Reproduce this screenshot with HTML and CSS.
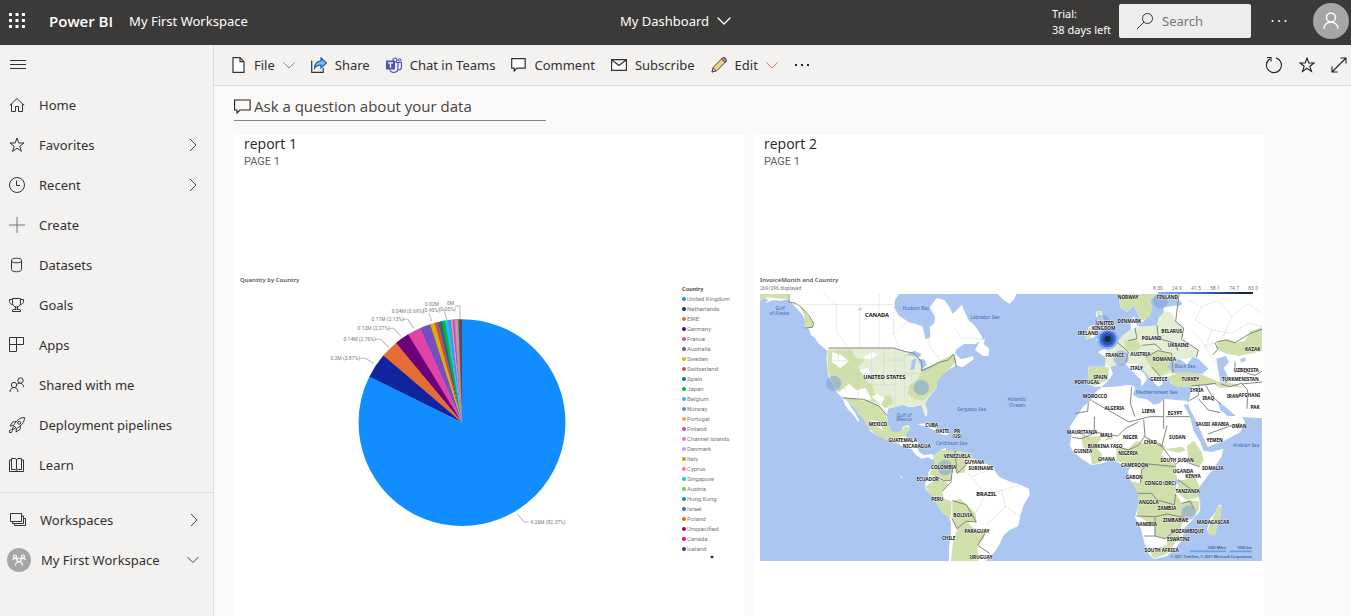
FILE: index.html
```html
<!DOCTYPE html>
<html lang="en">
<head>
<meta charset="utf-8">
<title>My Dashboard - Power BI</title>
<link rel="stylesheet" href="styles.css">
</head>
<body>
<header class="topbar">
  <div class="topbar-left">
    <button class="icon-btn waffle" aria-label="App launcher"><svg width="16" height="16" viewBox="0 0 16 16" fill="#fff"><path d="M0 0h3v3H0zM6.500 0h3v3h-3zM13 0h3v3h-3zM0 6h3v3H0zM6.500 6h3v3h-3zM13 6h3v3h-3zM0 12h3v3H0zM6.500 12h3v3h-3zM13 12h3v3h-3z"/></svg></button>
    <a class="brand" href="#">Power BI</a>
    <a class="crumb" href="#">My First Workspace</a>
  </div>
  <button class="dash-title">My Dashboard <svg width="14" height="8" viewBox="0 0 14 8"><path d="M.5.5 7 7 13.500.5" stroke="#fff" stroke-width="1.300" fill="none"/></svg></button>
  <div class="topbar-right">
    <div class="trial">Trial:<br>38 days left</div>
    <label class="search"><svg width="18" height="18" viewBox="0 0 18 18" fill="none" stroke="#333"><circle cx="11.500" cy="6.500" r="5"/><path d="M8 10 1 17"/></svg><input type="search" placeholder="Search" aria-label="Search"></label>
    <button class="icon-btn more-top" aria-label="More"><svg width="16" height="4" viewBox="0 0 16 4" fill="#fff"><circle cx="1.500" cy="2" r="1"/><circle cx="8" cy="2" r="1"/><circle cx="14.500" cy="2" r="1"/></svg></button>
    <button class="avatar" aria-label="Account"><svg width="16" height="18" viewBox="0 0 16 18" fill="none" stroke="#fff" stroke-width="1.400"><circle cx="8" cy="5.500" r="4.500"/><path d="M1 17c0-4 3-7 7-7s7 3 7 7"/></svg></button>
  </div>
</header>
<div class="shell">
  <nav class="sidebar">
    <button class="icon-btn burger" aria-label="Collapse navigation"><svg width="16" height="10" viewBox="0 0 16 10" stroke="#333"><path d="M0 .5h16M0 4.500h16M0 8.500h16"/></svg></button>
    <a class="nav-item" href="#"><svg class="ico" viewBox="0 0 16 16"><path d="M.7 8.500 8 1.500l7.300 7M2.500 7v7.500h4V9.500h3v5h4V7"/></svg><span>Home</span></a>
    <a class="nav-item" href="#"><svg class="ico" viewBox="0 0 16 16"><path d="m8 1 1.800 5h5.200l-4.200 3.200 1.600 5.200L8 11.200l-4.400 3.200 1.600-5.200L1 6h5.200z"/></svg><span>Favorites</span><svg class="chev" viewBox="0 0 8 14"><path d="m1 1 6 6-6 6"/></svg></a>
    <a class="nav-item" href="#"><svg class="ico" viewBox="0 0 16 16"><circle cx="8" cy="8" r="7.500"/><path d="M7.500 3.500v5h3.500"/></svg><span>Recent</span><svg class="chev" viewBox="0 0 8 14"><path d="m1 1 6 6-6 6"/></svg></a>
    <a class="nav-item" href="#"><svg class="ico plus" viewBox="0 0 16 16"><path d="M8 0v16M0 8h16"/></svg><span>Create</span></a>
    <a class="nav-item" href="#"><svg class="ico" viewBox="0 0 16 16"><ellipse cx="7.500" cy="3.500" rx="5" ry="2.300"/><path d="M2.500 3.500v9c0 3 10 3 10 0v-9"/></svg><span>Datasets</span></a>
    <a class="nav-item" href="#"><svg class="ico" viewBox="0 0 16 16"><path d="M3.500 1.500h8v5c0 4.500-8 4.500-8 0zM3.500 2.500h-3v2c0 2 1.500 3 3.500 3M11.500 2.500h3v2c0 2-1.500 3-3.500 3M6.500 10v2.500M8.500 10v2.500M3.500 14.500v-1.500c1-1 7-1 8 0v1.500z"/></svg><span>Goals</span></a>
    <a class="nav-item" href="#"><svg class="ico" viewBox="0 0 16 16"><path d="M.5.5h14v7h-7v7h-7zM7.500.5v7h-7"/></svg><span>Apps</span></a>
    <a class="nav-item" href="#"><svg class="ico" viewBox="0 0 16 16"><circle cx="11.500" cy="3.500" r="2.700"/><circle cx="5" cy="8" r="2.700"/><path d="M1 15c0-6 8-6 8 0M8.200 7.200c2.500-2 6-1 6.500 3"/></svg><span>Shared with me</span></a>
    <a class="nav-item" href="#"><svg class="ico" viewBox="0 0 16 16"><path d="M15.500.5c-5 0-8 3-11 8l3 3c5-3 8-6 8-11zM7.500 4.500l-4 .5-2.500 4 3.500-.5M11.500 8.500l-.5 4-4 2.500.5-3.500M4.500 9.500l-1.500 3 3.500-1M2.500 12.500l-2 1v2h2l1-2"/><circle cx="10.200" cy="5.800" r="1.500"/></svg><span>Deployment pipelines</span></a>
    <a class="nav-item" href="#"><svg class="ico" viewBox="0 0 16 16"><path d="M7.500 2v10.500M2.500 1.500H6L7.500 2.500 9 1.500h3.500v11H9l-1.500 1-1.500-1H2.500zM2.500 3h-2v11.500h14V3h-2"/></svg><span>Learn</span></a>
    <hr class="rule">
    <a class="nav-item ws" href="#"><svg class="ico" viewBox="0 0 16 16"><path d="M.5 1.500h11v8H.5zM11.500 4h2v7.500h-11v-2M13.500 6.500h2v7h-11v-2"/></svg><span>Workspaces</span><svg class="chev" viewBox="0 0 8 14"><path d="m1 1 6 6-6 6"/></svg></a>
    <a class="nav-item mine" href="#"><span class="badge"><svg width="14" height="12" viewBox="0 0 14 12" fill="none" stroke="#fff" stroke-width="1.200"><circle cx="3" cy="2.500" r="1.500"/><circle cx="11" cy="2.500" r="1.500"/><circle cx="7" cy="6" r="2"/><path d="M.5 6c1-2 3-2 5-1M13.500 6c-1-2-3-2-5-1M3.500 11.500c0-5 7-5 7 0"/></svg></span><span>My First Workspace</span><svg class="chev down" viewBox="0 0 12 8"><path d="m.5 1 5.500 5.500L11.500 1"/></svg></a>
  </nav>
  <main class="main">
    <div class="toolbar">
      <div class="tools">
        <button class="tool"><svg width="14" height="16" viewBox="0 0 14 16" fill="#fff" stroke="#333" stroke-width="1.200"><path d="M1 .7h7l4 4v10.600H1zM8 .7v4h4"/></svg>File<svg class="drop" viewBox="0 0 12 7" stroke="#5f95c5"><path d="m.5.5 5.500 5.500L11.500.5"/></svg></button>
        <button class="tool"><svg width="16" height="16" viewBox="0 0 16 16" fill="none"><path d="M.7 3.500v11.800h11.500V11" stroke="#333" stroke-width="1.200"/><path d="M10 1l5.500 5L10 11V8c-3 0-5 .8-6.500 3.200C3.500 7 6 4 10 4z" fill="#7fbcea" stroke="#0f5a9c" stroke-width="1.200"/></svg>Share</button>
        <button class="tool"><svg width="16" height="16" viewBox="0 0 16 16" fill="none"><circle cx="9" cy="3" r="2" stroke="#4b53bc" stroke-width="1.200"/><circle cx="13.800" cy="3" r="1.300" stroke="#4b53bc"/><path d="M10 5.500h5.500V10c0 2-1.500 3-3 3M12 6v5.500c0 5-8 5-8 1" stroke="#4b53bc" stroke-width="1.200"/><path d="M0 3.500h9v9H0z" fill="#4b53bc"/><path d="M2 5.800h5M4.500 5.800v5" stroke="#fff" stroke-width="1.300"/></svg>Chat in Teams</button>
        <button class="tool"><svg width="15" height="14" viewBox="0 0 15 14" fill="#fff" stroke="#333" stroke-width="1.200"><path d="M.7.7h13.500v9.500H6L3.200 13v-2.800H.7z"/></svg>Comment</button>
        <button class="tool"><svg width="16" height="12" viewBox="0 0 16 12" fill="#fff" stroke="#333" stroke-width="1.200"><path d="M.6.6h14.800v10.800H.6zM.6.8 8 6.500 15.400.8"/></svg>Subscribe</button>
        <button class="tool"><svg width="16" height="16" viewBox="0 0 16 16" stroke="#444"><path d="m1 15 1.500-5L11.500 1l3.500 3.500-9 9z" fill="#f8d37e"/><path d="m10.500 2 1.500-1.500c1.500-.7 4 1.500 3.300 3.300L14 5.500z" fill="#b57ab5"/><path d="m1 15 1.200-4 2.800 2.800z" fill="#eee"/></svg>Edit<svg class="drop" viewBox="0 0 12 7" stroke="#d0805a"><path d="m.5.5 5.500 5.500L11.500.5"/></svg></button>
        <button class="tool" aria-label="More options"><svg width="16" height="4" viewBox="0 0 16 4" fill="#222"><path d="M1 1h2v2H1zM7 1h2v2H7zM13 1h2v2h-2z"/></svg></button>
      </div>
      <div class="tools-right">
        <button class="icon-btn" aria-label="Refresh"><svg width="18" height="18" viewBox="0 0 18 18" fill="none" stroke="#222" stroke-width="1.100"><path d="M11 1.900A7.500 7.500 0 1 1 5 2.700M2 1.500h4v4"/></svg></button>
        <button class="icon-btn" aria-label="Favorite"><svg width="16" height="16" viewBox="0 0 16 16" fill="none" stroke="#222" stroke-width="1.100"><path d="m8 1 1.800 5h5.200l-4.200 3.200 1.600 5.200L8 11.200l-4.400 3.200 1.600-5.200L1 6h5.200z"/></svg></button>
        <button class="icon-btn" aria-label="Full screen"><svg width="16" height="16" viewBox="0 0 16 16" fill="none" stroke="#222" stroke-width="1.100"><path d="M1 15 15 1M9.500 1H15v5.500M1 9.500V15h5.500"/></svg></button>
      </div>
    </div>
    <label class="ask"><svg width="17" height="15" viewBox="0 0 17 15" fill="none" stroke="#222" stroke-width="1.100"><path d="M.6 1h15.500v10H6l-3 3v-3H.6z"/></svg><input type="text" placeholder="Ask a question about your data" aria-label="Ask a question about your data"></label>
    <div class="tiles">
      <section class="tile">
        <h2>report 1</h2>
        <p class="page">PAGE 1</p>
        <div class="visual">
          <h3>Quantity by Country</h3>
          <div class="pie-row">
            <svg class="pie" viewBox="240 286 440 280" role="img" aria-label="Quantity by Country">
              <g transform="rotate(-90 461 423)" fill="none" stroke-width="103">
                <circle cx="461" cy="423" r="51.500" pathLength="100" stroke="#5b4a55" stroke-dasharray="0 99.500 0.500 100"/>
                <circle cx="461" cy="423" r="51.500" pathLength="100" stroke="#7a3b6a" stroke-dasharray="0 99 0.700 100"/>
                <circle cx="461" cy="423" r="51.500" pathLength="100" stroke="#0aa88f" stroke-dasharray="0 99 0.500 100"/>
                <circle cx="461" cy="423" r="51.500" pathLength="100" stroke="#f98a8a" stroke-dasharray="0 99 0.350 100"/>
                <circle cx="461" cy="423" r="51.500" pathLength="100" stroke="#c4a200" stroke-dasharray="0 99 0.250 100"/>
                <circle cx="461" cy="423" r="51.500" pathLength="100" stroke="#b79cf5" stroke-dasharray="0 98.800 0.350 100"/>
                <circle cx="461" cy="423" r="51.500" pathLength="100" stroke="#e86bc4" stroke-dasharray="0 98.600 0.350 100"/>
                <circle cx="461" cy="423" r="51.500" pathLength="100" stroke="#a94fc4" stroke-dasharray="0 98.400 0.350 100"/>
                <circle cx="461" cy="423" r="51.500" pathLength="100" stroke="#ff9b5a" stroke-dasharray="0 98.100 0.400 100"/>
                <circle cx="461" cy="423" r="51.500" pathLength="100" stroke="#4092ff" stroke-dasharray="0 97.700 0.550 100"/>
                <circle cx="461" cy="423" r="51.500" pathLength="100" stroke="#15c6f4" stroke-dasharray="0 97.200 0.600 100"/>
                <circle cx="461" cy="423" r="51.500" pathLength="100" stroke="#1aab40" stroke-dasharray="0 96.700 0.650 100"/>
                <circle cx="461" cy="423" r="51.500" pathLength="100" stroke="#197278" stroke-dasharray="0 96.200 0.650 100"/>
                <circle cx="461" cy="423" r="51.500" pathLength="100" stroke="#d64550" stroke-dasharray="0 95.600 0.700 100"/>
                <circle cx="461" cy="423" r="51.500" pathLength="100" stroke="#d9b300" stroke-dasharray="0 94.900 0.800 100"/>
                <circle cx="461" cy="423" r="51.500" pathLength="100" stroke="#744ec2" stroke-dasharray="0 93.300 1.700 100"/>
                <circle cx="461" cy="423" r="51.500" pathLength="100" stroke="#e044a7" stroke-dasharray="0 91.200 2.200 100"/>
                <circle cx="461" cy="423" r="51.500" pathLength="100" stroke="#6b007b" stroke-dasharray="0 88.900 2.370 100"/>
                <circle cx="461" cy="423" r="51.500" pathLength="100" stroke="#e66c37" stroke-dasharray="0 86.100 2.900 100"/>
                <circle cx="461" cy="423" r="51.500" pathLength="100" stroke="#12239e" stroke-dasharray="0 82.300 3.940 100"/>
                <circle cx="461" cy="423" r="51.500" pathLength="100" stroke="#118dff" stroke-dasharray="82.370 100"/>
              </g>
              <path class="leads" d="M359 359h6l8 5M374 340h6l8 8M388 329h5l7 8M402 320h5l6 9M428 314l3 8M443 310l3 11M454 307h5v13M516 514l7 8h4"/>
              <g class="pie-text">
                <text x="330" y="361">0.2M (3.87%)</text><text x="343" y="342">0.14M (2.76%)</text><text x="357" y="331">0.12M (2.27%)</text><text x="371" y="322">0.11M (2.13%)</text><text x="391" y="314">0.04M (0.69%)</text><text x="424" y="307">0.02M</text><text x="422" y="313">(0.45%)</text><text x="446" y="306">0M</text><text x="438" y="312">(0.05%)</text><text x="529" y="524">4.26M (82.37%)</text>
              </g>
            </svg>
            <div class="legend">
              <strong>Country</strong>
              <ul>
                <li class="c1">United Kingdom</li><li class="c2">Netherlands</li><li class="c3">EIRE</li><li class="c4">Germany</li><li class="c5">France</li><li class="c6">Australia</li><li class="c7">Sweden</li><li class="c8">Switzerland</li><li class="c9">Spain</li><li class="c10">Japan</li><li class="c11">Belgium</li><li class="c12">Norway</li><li class="c13">Portugal</li><li class="c14">Finland</li><li class="c15">Channel Islands</li><li class="c16">Denmark</li><li class="c17">Italy</li><li class="c18">Cyprus</li><li class="c19">Singapore</li><li class="c20">Austria</li><li class="c21">Hong Kong</li><li class="c22">Israel</li><li class="c23">Poland</li><li class="c24">Unspecified</li><li class="c25">Canada</li><li class="c26">Iceland</li>
              </ul>
              <svg class="more" width="4" height="3" viewBox="0 0 4 3"><path d="M0 0h4L2 3z" fill="#333"/></svg>
            </div>
          </div>
        </div>
      </section>
      <section class="tile">
        <h2>report 2</h2>
        <p class="page">PAGE 1</p>
        <div class="visual">
          <h3>InvoiceMonth and Country</h3>
          <div class="map-head"><span>269/296 displayed</span>
            <div class="scale"><div class="nums"><span>8.30</span><span>24.9</span><span>41.5</span><span>58.1</span><span>74.7</span><span>83.0</span></div><div class="bar"></div></div>
          </div>
          <svg class="map" viewBox="15 72 1506 801" role="img" aria-label="InvoiceMonth and Country">
            <path fill="#abc7f1" d="M15 72h1506v801H15z"/>
            <g class="land">
              <path d="M15 72V92L28 84 40 90 30 100 55 90 78 92 97 88 112 102 128 118 142 134 150 150 152 172 162 178 168 196 180 204 190 220 204 232 218 242 214 262 218 300 222 325 235 345 246 368 262 384 270 405 282 422 298 438 309 455 313 452 300 428 286 408 278 392 298 412 312 432 328 448 345 468 344 482 362 494 388 506 410 515 434 524 450 532 470 538 482 554 500 566 520 562 532 570 540 560 530 552 508 556 492 546 486 532 490 516 478 506 462 506 450 498 456 488 466 472 458 466 444 470 440 484 424 490 408 484 398 462 396 436 400 416 424 403 448 406 462 412 474 408 486 402 500 406 506 426 512 440 518 428 510 398 522 378 544 354 546 332 562 314 580 300 604 286 622 292 656 268 654 258 634 264 618 268 600 250 604 238 628 222 662 222 684 206 672 186 658 166 642 152 630 128 620 104 606 120 592 132 584 112 568 90 545 84 524 112 540 140 538 160 524 172 526 202 512 208 502 168 460 156 430 136 418 112 420 90 432 72z"/>
              <path d="M660 240 676 210 690 208 686 222 703 236 700 258 684 258zM728 72l18 18 18 12 14-16 6-14z"/>
              <path d="M535 558 558 540 572 534 576 548 600 542 645 550 655 566 690 580 712 590 722 606 734 622 768 636 796 644 822 656 824 674 806 704 796 738 790 768 764 780 746 796 732 826 716 850 700 864 692 873H582V832L587 800 588 760 583 742 562 730 546 702 530 676 512 656 510 640 520 626V606L532 594 540 580z"/>
              <path d="M486 464 510 460 535 472 558 482 536 480 510 468zM540 486l26-4 18 10-14 4zM598 494h18v5h-18zM436 618l6 2-2 6z"/>
              <path d="M1022 366 1040 352 1076 350 1128 344 1140 352 1134 374 1150 384 1176 388 1196 404 1214 400 1228 386 1262 390 1294 392 1306 402 1286 404 1304 438 1316 482 1336 516 1346 542 1370 546 1405 536 1400 560 1372 600 1340 642 1326 664 1336 698 1335 724 1310 752 1286 776 1284 806 1264 832 1236 858 1196 868 1180 850 1168 818 1158 778 1140 742 1150 706 1150 668 1128 632 1118 606 1130 586 1096 582 1074 568 1042 580 1010 586 980 566 955 546 944 526 950 496 944 470 964 440 986 408 1008 392z"/>
              <path d="M1392 704 1400 706 1396 740 1384 774 1380 796 1364 794 1356 780 1364 748 1380 728z"/>
              <path d="M1093 72 1095 112 1116 126 1136 106 1148 130 1160 158 1180 140 1192 110 1184 92 1202 72zM1232 80 1250 72H1521V445L1470 442 1440 436 1408 408 1388 394 1396 420 1418 438 1440 438 1456 430 1470 456 1456 486 1408 512 1358 530 1344 500 1328 462 1306 420 1300 404 1306 376 1310 348 1268 352 1246 340 1240 320 1214 322 1224 342 1210 350 1188 330 1172 300 1150 282 1142 290 1168 310 1176 328 1160 350 1158 330 1134 306 1110 280 1094 276 1066 290 1074 312 1058 334 1040 350 1018 350 998 342 1000 314 998 290 1050 290 1054 264 1028 246 1054 234 1086 216 1106 194 1128 178 1126 152 1138 138 1144 164 1164 176 1206 166 1212 142 1226 130 1226 112 1268 106 1272 90z"/>
              <path d="M1022 126l16-4 8 26 22 26 8 24-28 12-26 2 16-18-8-22zM1000 172l16-8 10 12-8 26-26 6z"/>
            </g>
            <g class="green">
              <path d="M15 72V90L40 82 76 86 100 86V72zM134 108 148 120 160 140 176 160 174 172 150 170 148 136z"/>
              <path class="pale" d="M218 242 220 234H416L448 244 478 250 500 276 500 300 540 284 556 276 580 270 596 252 604 276 562 314 546 332 544 354 510 398 518 440 506 426 500 406 470 412 448 404 400 416 386 412 360 398 326 388 264 384 235 345 218 300z"/>
              <path d="M218 242 290 238 300 262 330 270 310 290 330 330 352 346 358 370 390 402 360 398 326 388 264 384 235 345 218 300zM500 300 596 252 604 276 546 332 544 354 506 392 480 388 458 370 462 346 486 330zM366 384l40-8 10 24-26 14z"/>
              <path d="M266 386 326 388 372 408 394 436 398 462 410 486 440 484 450 470 466 472 450 498 436 502 432 522 400 512 362 494 344 478 316 436 288 402z"/>
              <path d="M535 558 560 540 600 542 645 550 656 564 634 584 628 608 606 610 594 590 588 632 560 630 540 618 522 616 540 582zM512 650 540 628 566 632 582 642 562 664 566 686 590 694 588 744 562 730 534 684zM592 692 616 686 634 704 662 730 664 756 634 754 606 776 592 744zM606 778 636 754 652 772 690 790 686 806 668 826 670 873H588L594 818z"/>
              <path d="M980 490 1006 500 1044 498 1022 530 1040 550 1042 576 1010 584 1006 548 982 530zM1042 512l34-20-4 16zM1084 528 1120 536 1144 514 1166 520 1180 504 1214 520 1232 530 1218 554 1262 586 1266 630 1262 670 1280 700 1302 690 1334 694 1330 724 1308 740 1290 738 1278 770 1272 800 1256 826 1234 852 1196 866 1184 844 1236 824 1236 806 1200 798 1198 770 1172 752 1146 736 1150 670 1128 634 1156 640 1160 600 1120 582 1084 574zM1286 630 1318 616 1334 650 1328 684 1294 690 1268 668 1270 630zM1296 528 1316 512 1340 546 1346 570 1334 588 1300 576zM1226 538 1280 530 1294 540 1270 548z"/>
              <path d="M1392 706 1400 710 1396 740 1380 796 1364 794 1358 780 1380 728z"/>
              <path d="M1093 72 1095 112 1116 126 1136 106 1148 130 1160 154 1186 138 1192 110 1184 92 1202 72zM1240 76 1270 72V94zM1386 334 1442 342 1466 352 1430 350 1396 354 1368 338zM1384 216 1418 208 1440 218 1470 212 1486 184 1521 172V244L1450 258 1412 250 1390 240zM1240 320 1272 306 1320 306 1350 318 1386 334 1370 344 1310 348 1266 352 1246 338zM1000 290 1062 292 1060 330 1016 348 998 338z"/>
              <path class="pale" d="M1054 234 1086 216 1106 194 1128 178 1146 170 1206 166 1212 142 1232 124 1250 128 1262 154 1286 174 1280 212 1330 240 1324 262 1280 268 1250 278 1254 310 1214 322 1186 326 1150 282 1110 280 1064 290 1050 280z"/>
              <path d="M1108 212 1142 206 1162 230 1140 246 1112 240zM1170 262 1206 242 1248 252 1254 286 1240 308 1216 318 1196 302z"/>
              <path d="M1024 128l14-4-4 22zM1000 176l12-8-6 36-14 2z"/>
            </g>
            <path class="void" d="M232 246l28 10 22 18-26 20-26-18zM248 370l34-28 22 18 28-6 18 34-24 4-60-12zM322 264l28-18 16 8-18 14zM314 300l24-6 12 20-22 8zM350 380l16-8 24 12-14 20zM346 450l24 4 16 28-18-12z"/>
            <g class="water">
              <path d="M1238 290 1256 266 1278 270 1296 284 1312 262 1330 266 1360 296 1342 312 1290 306 1254 310zM1384 266 1412 258 1422 276 1406 294 1418 318 1418 340 1396 334 1390 302zM450 258l28-16 22 10-8 10-28-6zM466 300l4-28 14-8-6 36zM488 266l20 2 8 18-14 10zM494 300l28-10 12 2-26 12zM306 120l16-8-4 8zM1262 628l14 2-4 12-12-2zM1288 404l24 28 20 36-18-16zM1258 98l16-8 8 12-12 8zM1456 268l14-6 2 10-14 6z"/>
            </g>
            <path class="border" d="M220 234H416L448 244 478 250 500 276 500 302 540 284 556 276 580 270 596 252 604 290M102 72V96L122 100 134 108 160 134 176 160 172 172 150 174M264 384 326 388 372 408 396 436M594 590 588 632 566 632 540 618M600 542 606 610 634 584M562 664 590 634M592 692 634 704 664 756 634 754 606 776 590 744M690 790 668 826 704 850M1000 398 998 424 960 430M1010 392 1122 456 1184 440 1226 440M1130 350 1126 400 1140 440M1226 388V476M1232 440H1304M1018 440 1018 486 1088 498 1110 476 1150 456M1018 490 980 506 952 502M1166 448 1170 498 1150 526 1120 540 1086 530M1166 498 1220 530 1236 466M1214 520 1262 584 1280 566 1304 580 1334 590M1156 640 1160 600 1180 582 1262 590M1148 670 1190 670 1206 690 1258 704 1262 672M1144 738 1202 740 1236 732 1284 742M1200 740V798H1168M1200 798 1230 806 1264 780M1270 630 1320 666M1280 700 1306 694 1316 716M1086 216 1120 246 1112 276M1140 174 1146 206 1120 212M1206 166 1210 206 1172 206M1210 206 1262 220 1268 242M1172 262 1208 242 1250 250 1254 308M1162 226 1200 222 1220 240M1248 182 1280 184M1190 290 1216 320M1310 348 1352 344 1382 340M1332 344 1330 376 1304 392M1352 346 1372 380 1398 402M1384 216 1412 210 1440 218 1486 190 1521 178M1374 254 1388 238 1380 218M1440 308V276M1398 342 1424 350 1460 340 1478 360 1476 416M1446 300 1500 316 1521 304M1330 386 1360 420 1396 428M1358 492 1420 470 1456 460M1272 72 1262 154 1286 174 1280 208 1330 240 1324 262M1460 342 1521 336"/>
            <path class="state" d="M102 104H416M206 72 244 104V184L280 234M314 104V234M372 72V234M416 110V190L466 148M416 190 432 234M520 206 526 232 556 270M604 180 620 204 650 206 684 206M220 272H280V310M250 236V272M280 310H350V344H420M350 236V310M386 236V344M420 236V412M448 244V384M470 308V384M386 270H450M420 310H490M456 350H520M310 310V386M252 310 274 370M600 580 650 620 712 596M650 620 690 676 664 726M690 676 740 660 796 646M740 660 752 710 690 768M752 710 796 738M1300 90 1340 110 1320 150 1370 180 1350 230 1400 210M1340 110 1390 90 1430 140 1400 210M1430 140 1480 100 1521 130M1370 180 1430 190 1480 160 1521 170M1310 180 1340 210 1380 280"/>
            <g class="dots"><circle cx="236" cy="340" r="23"/><circle cx="499" cy="353" r="23"/><circle cx="570" cy="593" r="23"/><circle cx="1098" cy="264" r="23"/><circle cx="1042" cy="156" r="22"/><circle cx="1216" cy="94" r="22"/><circle cx="1301" cy="728" r="22"/></g>
            <circle cx="1058" cy="207" r="32" fill="#6d9cf0" opacity=".6"/><circle cx="1058" cy="207" r="25" fill="#3f74dc"/><circle cx="1058" cy="207" r="18" fill="#2a52ac"/><circle cx="1058" cy="207" r="10" fill="#1b2c55"/>
            <g class="sea"><text x="75" y="119">Gulf</text><text x="73" y="134">of Alaska</text><text x="483" y="119">Hudson Bay</text><text x="690" y="148">Labrador Sea</text><text x="447" y="440">Gulf of</text><text x="447" y="454">Mexico</text><text x="650" y="424">Sargasso Sea</text><text x="590" y="526">Caribbean Sea</text><text x="1290" y="295">Black Sea</text><text x="1205" y="373">Mediterranean Sea</text><text x="1474" y="532">Arabian Sea</text><g class="ocean"><text x="786" y="392">Atlantic</text><text x="786" y="410">Ocean</text></g></g>
            <g class="lands"><g class="big"><text x="366" y="142">CANADA</text><text x="388" y="328">UNITED STATES</text><text x="694" y="679">BRAZIL</text></g>
              <text x="369" y="467">MEXICO</text><text x="443" y="517">GUATEMALA</text><text x="485" y="534">NICARAGUA</text><text x="530" y="471">CUBA</text><text x="562" y="489">HAITI</text><text x="606" y="489">PR</text><text x="606" y="503">(US)</text><text x="606" y="565">VENEZUELA</text><text x="658" y="583">GUYANA</text><text x="678" y="599">SURINAME</text><text x="566" y="597">COLOMBIA</text><text x="518" y="632">ECUADOR</text><text x="547" y="694">PERU</text><text x="624" y="740">BOLIVIA</text><text x="666" y="788">PARAGUAY</text><text x="581" y="811">CHILE</text><text x="678" y="866">URUGUAY</text>
              <text x="1119" y="88">NORWAY</text><text x="1237" y="88">FINLAND</text><text x="1123" y="160">DENMARK</text><text x="1050" y="165">UNITED</text><text x="1046" y="179">KINGDOM</text><text x="999" y="195">IRELAND</text><text x="1250" y="189">BELARUS</text><text x="1190" y="209">POLAND</text><text x="1270" y="232">UKRAINE</text><text x="1079" y="262">FRANCE</text><text x="1156" y="258">AUSTRIA</text><text x="1228" y="274">ROMANIA</text><text x="1145" y="301">ITALY</text><text x="1036" y="327">SPAIN</text><text x="996" y="343">PORTUGAL</text><text x="1211" y="333">GREECE</text><text x="1306" y="333">TURKEY</text><text x="1493" y="243">KAZAK</text><text x="1474" y="305">UZBEKISTA</text><text x="1456" y="332">TURKMENISTAN</text><text x="1325" y="365">SYRIA</text><text x="1360" y="390">IRAQ</text><text x="1434" y="385">IRAN</text><text x="1483" y="382">AFGHANI</text><text x="1500" y="418">PAK</text><text x="1020" y="385">MOROCCO</text><text x="1078" y="421">ALGERIA</text><text x="1181" y="430">LIBYA</text><text x="1260" y="434">EGYPT</text><text x="1372" y="468">SAUDI ARABIA</text><text x="1452" y="475">OMAN</text><text x="1379" y="515">YEMEN</text>
              <text x="981" y="491">MAURITANIA</text><text x="1053" y="502">MALI</text><text x="1126" y="506">NIGER</text><text x="1186" y="523">CHAD</text><text x="1267" y="506">SUDAN</text><text x="1050" y="535">BURKINA FASO</text><text x="984" y="550">GUINEA</text><text x="1054" y="574">GHANA</text><text x="1119" y="554">NIGERIA</text><text x="1266" y="575">SOUTH SUDAN</text><text x="1139" y="590">CAMEROON</text><text x="1373" y="599">SOMALIA</text><text x="1284" y="609">UGANDA</text><text x="1314" y="624">KENYA</text><text x="1138" y="628">GABON</text><text x="1216" y="645">CONGO (DRC)</text><text x="1298" y="669">TANZANIA</text><text x="1181" y="702">ANGOLA</text><text x="1236" y="721">ZAMBIA</text><text x="1262" y="756">ZIMBABWE</text><text x="1374" y="762">MADAGASCAR</text><text x="1174" y="769">NAMIBIA</text><text x="1297" y="788">MOZAMBIQUE</text><text x="1270" y="813">ESWATINI</text><text x="1220" y="847">SOUTH AFRICA</text></g>
            <path d="M1305 844h108M1424 844h66" stroke="#5ba6f4" stroke-width="5"/>
            <g class="credit"><text x="1412" y="838">1000 Miles</text><text x="1490" y="838">1000 km</text><text x="1490" y="864">© 2021 TomTom, © 2021 Microsoft Corporation</text></g>
          </svg>
        </div>
      </section>
    </div>
  </main>
</div>
</body>
</html>
```

FILE: styles.css
```css
* { box-sizing: border-box; }
body { margin: 0; height: 100vh; display: flex; flex-direction: column; overflow: hidden; background: #faf9f8; color: #323130; font: 13px "Noto Sans", "Open Sans", sans-serif; }
button, input { font: inherit; color: inherit; border: 0; padding: 0; background: none; }
a { color: inherit; text-decoration: none; }
svg { display: block; flex: none; }
h2, h3, p, ul { margin: 0; padding: 0; font-weight: 400; }

.topbar { flex: none; height: 45px; display: grid; grid-template-columns: 1fr auto 1fr; align-items: center; background: #3b3a39; color: #fff; }
.topbar-left { display: flex; align-items: center; padding: 0 0 3px 9px; }
.brand { margin-left: 24px; font: 600 15px "Open Sans", sans-serif; }
.crumb { margin-left: 16px; }
.dash-title { display: flex; align-items: center; gap: 8px; padding-bottom: 3px; }
.topbar-right { display: flex; justify-content: flex-end; align-items: center; padding: 0 2px 3px 0; }
.trial { padding-top: 2px; font-size: 11px; line-height: 16px; }
.search { display: flex; align-items: center; gap: 8px; width: 132px; height: 34px; margin-left: 8px; padding-left: 17px; border-radius: 2px; background: #ededed; }
.search input { width: 80px; outline: 0; color: #333; }
.search input::placeholder { color: #767676; opacity: 1; }
.more-top { margin: 0 26px 0 20px; }
.avatar { width: 36px; height: 36px; border-radius: 50%; background: #a6a6a6; display: grid; place-items: center; }

.shell { flex: 1; min-height: 0; display: flex; }
.sidebar { flex: none; width: 214px; border-right: 1px solid #dedcda; background: #f3f2f1; }
.burger { display: flex; align-items: center; height: 40px; padding-left: 10px; }
.nav-item { display: flex; align-items: center; height: 40px; padding: 0 16px 0 9px; }
.nav-item span { flex: 1; }
.ico { width: 16px; height: 16px; margin-right: 14px; fill: none; stroke: #333; }
.plus { stroke: #777; }
.chev { width: 8px; height: 14px; fill: none; stroke: #444; }
.chev.down { width: 12px; height: 8px; }
.rule { margin: 7px 0; border: 0; border-top: 1px solid #dedcda; }
.ws { padding-left: 10px; padding-right: 15px; }
.mine { padding: 0 14px 0 7px; }
.nav-item .badge { flex: none; display: grid; place-items: center; width: 24px; height: 24px; margin-right: 10px; border-radius: 50%; background: #a6a6a6; }

.main { flex: 1; min-width: 0; display: flex; flex-direction: column; }
.toolbar { flex: none; height: 41px; display: flex; justify-content: space-between; align-items: center; padding: 0 4px 0 18px; border-bottom: 1px solid #dedcda; background: #f3f2f1; }
.tools { display: flex; gap: 16px; }
.tool { display: flex; align-items: center; gap: 8px; white-space: nowrap; }
.drop { width: 12px; height: 7px; fill: none; }
.tools-right { display: flex; align-items: center; gap: 16px; }
.ask { flex: none; display: flex; align-items: center; gap: 3px; width: 312px; height: 28px; margin: 7px 0 14px 20px; padding-bottom: 1px; border-bottom: 1px solid #8a8886; }
.ask input { flex: 1; min-width: 0; outline: 0; font: 15px "Open Sans", sans-serif; }
.ask input::placeholder { color: #444; opacity: 1; }

.tiles { flex: 1; min-height: 0; display: grid; grid-template-columns: repeat(2, minmax(0, 510px)); gap: 10px; padding-left: 20px; }
.tile { background: #fff; }
.tile h2 { padding-left: 10px; font: 14px/18px "Open Sans", sans-serif; color: #252423; }
.page { padding: 1px 0 0 10px; font: 11px/16px Roboto, sans-serif; color: #605e5c; }
.visual { padding: 105px 2px 0 6px; font-family: Roboto, sans-serif; }
.visual h3 { font: 600 6px/10px "Noto Sans", sans-serif; color: #555; }
.pie-row { display: flex; margin-right: -2px; }
.pie { flex: 1; min-width: 0; height: auto; }
.leads { fill: none; stroke: #b8b8b8; }
.pie-text { font-size: 5px; fill: #777; }
.legend { flex: none; width: 62px; font-size: 6px; line-height: 10px; color: #777; }
.legend strong { display: block; line-height: 8px; color: #555; font-size: 6px; }
.legend ul { list-style: none; padding-top: 1px; }
.legend li { display: flex; align-items: center; gap: 1px; }
.legend li::before { content: ""; width: 4px; height: 4px; border-radius: 50%; background: var(--c); }
.more { margin: 2px 0 0 28px; }
.c1 { --c: #118dff; } .c2 { --c: #12239e; } .c3 { --c: #e66c37; } .c4 { --c: #6b007b; } .c5 { --c: #e044a7; } .c6 { --c: #744ec2; } .c7 { --c: #d9b300; } .c8 { --c: #d64550; } .c9 { --c: #197278; } .c10 { --c: #1aab40; } .c11 { --c: #15c6f4; } .c12 { --c: #4092ff; } .c13 { --c: #ff9b5a; } .c14 { --c: #a94fc4; } .c15 { --c: #f472d0; } .c16 { --c: #b5a1ff; } .c17 { --c: #c4a200; } .c18 { --c: #ff8080; } .c19 { --c: #00dbbc; } .c20 { --c: #5bd667; } .c21 { --c: #0091d5; } .c22 { --c: #4668c5; } .c23 { --c: #ff6300; } .c24 { --c: #99008a; } .c25 { --c: #ec008c; } .c26 { --c: #533285; }

.map-head { display: flex; justify-content: space-between; height: 9px; font-size: 5px; line-height: 7px; color: #777; }
.scale { width: 105px; margin-right: 4px; }
.nums { display: flex; justify-content: space-between; line-height: 7px; }
.bar { height: 2px; margin: 0 5px; background: linear-gradient(90deg, #92b4f5, #4f82e8 30%, #2d56b5 60%, #1b2433 90%); }
.map { width: 100%; height: auto; }
.land { fill: #fff; }
.green { fill: #cfe0ab; }
.green .pale { fill: #e4eed4; }
.void { fill: #fff; }
.water { fill: #abc7f1; }
.border { fill: none; stroke: #85857e; stroke-width: 3; }
.state { fill: none; stroke: #ccc; stroke-width: 2; stroke-dasharray: 5 3; }
.dots { fill: #7ba1d8; opacity: .55; }
.map text { font-family: "Noto Sans", sans-serif; font-size: 14px; text-anchor: middle; }
.lands text { font-weight: 700; fill: #111; stroke: #fff; stroke-width: 2px; paint-order: stroke; }
.map .big text { font-size: 17px; }
.sea text { fill: #4668ad; }
.map .ocean text { font-size: 16px; }
.map .credit text { font-size: 11px; text-anchor: end; fill: #222; }
```
